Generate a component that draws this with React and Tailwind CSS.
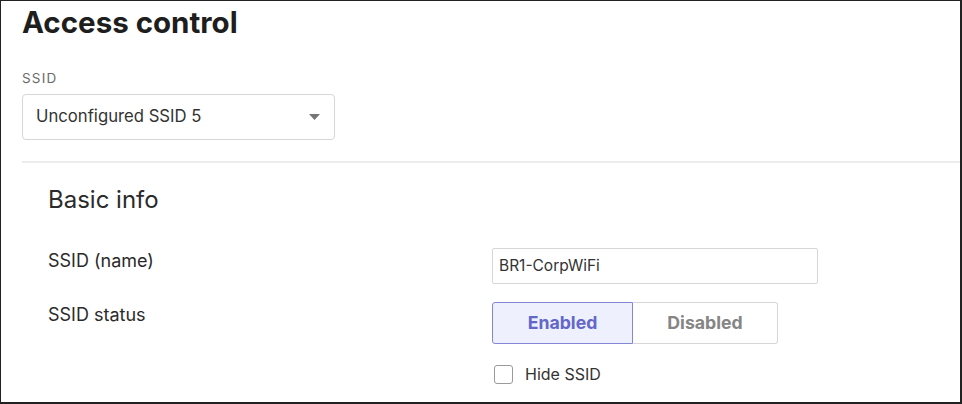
const font = { fontFamily: 'Inter, "Noto Sans", sans-serif' };

const Caret = () => (
  <svg width="11" height="6" viewBox="0 0 11 6" className="text-[#757575]">
    <path d="M0 0 L11 0 L5.5 6 Z" fill="currentColor" />
  </svg>
);

const App = () => {
  return (
    <div
      className="w-[962px] h-[404px] bg-white border-l border-t border-r-2 border-b-2 border-[#222] overflow-hidden text-[#2b2b2b]"
      style={font}
    >
      <div className="pl-[21px] pt-[4px]">
        <h1 className="text-[29.5px] leading-[34px] font-bold text-[#1e1e1e]">Access control</h1>

        <div className="mt-[31px] text-[13.5px] leading-[16px] tracking-[1.2px] text-[#6b6b6b]">SSID</div>
        <div className="mt-[8px] w-[313px] h-[46px] border border-[#d6d6d6] rounded-[4px] flex items-center justify-between pl-[13px] pr-[14px]">
          <span className="text-[16.7px] text-[#333]">Unconfigured SSID 5</span>
          <Caret />
        </div>

        <div className="mt-[21px] h-[2px] bg-[#ececec]" />

        <div className="pl-[26px]">
          <h2 className="mt-[22px] text-[24px] leading-[30px] text-[#2b2b2b]">Basic info</h2>

          <div className="mt-[33px] flex">
            <div className="w-[444px] mt-[1px] text-[18px] leading-[24px]">SSID (name)</div>
            <div className="w-[326px] h-[36px] border border-[#d6d6d6] rounded-[2px] flex items-center pl-[6px] text-[15.5px] text-[#333]">
              BR1-CorpWiFi
            </div>
          </div>

          <div className="mt-[18px] flex">
            <div className="w-[444px] mt-[1px] text-[18px] leading-[24px]">SSID status</div>
            <div className="flex flex-col">
              <div className="flex h-[42px]">
                <button className="w-[141px] h-full bg-[#eef0fd] border border-[#8487d6] rounded-l-[3px] text-[17.7px] font-bold text-[#6467c8]">
                  Enabled
                </button>
                <button className="w-[145px] h-full bg-white border border-l-0 border-[#d6d6d6] rounded-r-[3px] text-[17.7px] font-bold text-[#858585]">
                  Disabled
                </button>
              </div>
              <label className="mt-[18px] ml-[2px] flex items-center gap-[12px]">
                <span className="w-[19px] h-[19px] border border-[#9a9a9a] rounded-[3px] bg-white" />
                <span className="text-[16px] text-[#333]">Hide SSID</span>
              </label>
            </div>
          </div>
        </div>
      </div>
    </div>
  );
};

export default App;
